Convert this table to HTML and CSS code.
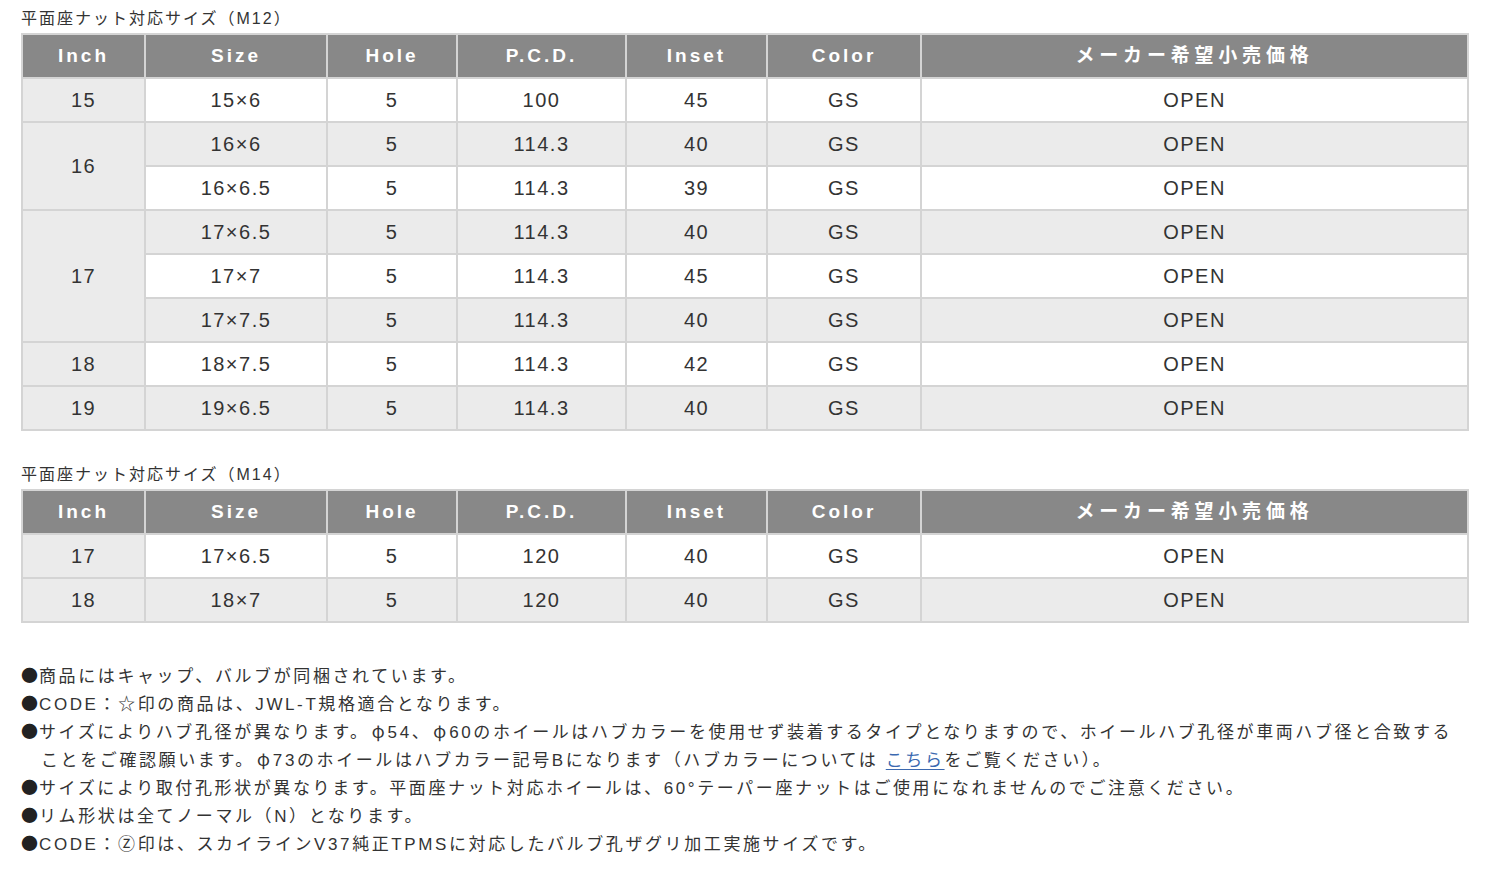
FILE: index.html
```html
<!DOCTYPE html>
<html lang="ja">
<head>
<meta charset="utf-8">
<title>サイズ表</title>
<link rel="stylesheet" href="styles.css">
</head>
<body>
<div class="page">
  <h2 class="caption">平面座ナット対応サイズ（M12）</h2>
  <table class="spec">
    <colgroup>
      <col class="c-inch"><col class="c-size"><col class="c-hole"><col class="c-pcd"><col class="c-inset"><col class="c-color"><col class="c-price">
    </colgroup>
    <thead>
      <tr><th>Inch</th><th>Size</th><th>Hole</th><th>P.C.D.</th><th>Inset</th><th>Color</th><th class="jp">メーカー希望小売価格</th></tr>
    </thead>
    <tbody>
      <tr><td class="inch">15</td><td>15×6</td><td>5</td><td>100</td><td>45</td><td>GS</td><td>OPEN</td></tr>
      <tr class="alt"><td class="inch" rowspan="2">16</td><td>16×6</td><td>5</td><td>114.3</td><td>40</td><td>GS</td><td>OPEN</td></tr>
      <tr><td>16×6.5</td><td>5</td><td>114.3</td><td>39</td><td>GS</td><td>OPEN</td></tr>
      <tr class="alt"><td class="inch" rowspan="3">17</td><td>17×6.5</td><td>5</td><td>114.3</td><td>40</td><td>GS</td><td>OPEN</td></tr>
      <tr><td>17×7</td><td>5</td><td>114.3</td><td>45</td><td>GS</td><td>OPEN</td></tr>
      <tr class="alt"><td>17×7.5</td><td>5</td><td>114.3</td><td>40</td><td>GS</td><td>OPEN</td></tr>
      <tr><td class="inch">18</td><td>18×7.5</td><td>5</td><td>114.3</td><td>42</td><td>GS</td><td>OPEN</td></tr>
      <tr class="alt"><td class="inch">19</td><td>19×6.5</td><td>5</td><td>114.3</td><td>40</td><td>GS</td><td>OPEN</td></tr>
    </tbody>
  </table>

  <h2 class="caption">平面座ナット対応サイズ（M14）</h2>
  <table class="spec">
    <colgroup>
      <col class="c-inch"><col class="c-size"><col class="c-hole"><col class="c-pcd"><col class="c-inset"><col class="c-color"><col class="c-price">
    </colgroup>
    <thead>
      <tr><th>Inch</th><th>Size</th><th>Hole</th><th>P.C.D.</th><th>Inset</th><th>Color</th><th class="jp">メーカー希望小売価格</th></tr>
    </thead>
    <tbody>
      <tr><td class="inch">17</td><td>17×6.5</td><td>5</td><td>120</td><td>40</td><td>GS</td><td>OPEN</td></tr>
      <tr class="alt"><td class="inch">18</td><td>18×7</td><td>5</td><td>120</td><td>40</td><td>GS</td><td>OPEN</td></tr>
    </tbody>
  </table>

  <div class="notes">
    <p><span class="dot">●</span>商品にはキャップ、バルブが同梱されています。</p>
    <p><span class="dot">●</span>CODE：☆印の商品は、JWL-T規格適合となります。</p>
    <p><span class="dot">●</span>サイズによりハブ孔径が異なります。<span class="phi">φ</span>54、<span class="phi">φ</span>60のホイールはハブカラーを使用せず装着するタイプとなりますので、ホイールハブ孔径が車両ハブ径と合致することをご確認願います。<span class="phi">φ</span>73のホイールはハブカラー記号Bになります（ハブカラーについては <a href="#">こちら</a>をご覧ください）。</p>
    <p><span class="dot">●</span>サイズにより取付孔形状が異なります。平面座ナット対応ホイールは、60°テーパー座ナットはご使用になれませんのでご注意ください。</p>
    <p><span class="dot">●</span>リム形状は全てノーマル（N）となります。</p>
    <p><span class="dot">●</span>CODE：Ⓩ印は、スカイラインV37純正TPMSに対応したバルブ孔ザグリ加工実施サイズです。</p>
  </div>
</div>
</body>
</html>
```

FILE: styles.css
```css
html, body {
  margin: 0;
  padding: 0;
  background: #ffffff;
}

body {
  font-family: "Liberation Sans", "Noto Sans CJK JP", sans-serif;
  color: #333333;
}

.page {
  padding: 5px 20px 20px 21px;
}

.caption {
  margin: 0 0 2px 0;
  padding-top: 2px;
  font-size: 16px;
  font-weight: normal;
  line-height: 24px;
  letter-spacing: 2px;
  color: #333333;
}

.spec {
  width: 1446px;
  border-collapse: collapse;
  table-layout: fixed;
  margin-bottom: 30px;
}

.c-inch { width: 123px; }
.c-size { width: 182px; }
.c-hole { width: 130px; }
.c-pcd { width: 169px; }
.c-inset { width: 141px; }
.c-color { width: 154px; }
.c-price { width: 547px; }

.spec th,
.spec td {
  border: 2px solid #d4d4d4;
  height: 42px;
  padding: 0;
  text-align: center;
  vertical-align: middle;
  font-size: 20px;
  letter-spacing: 1.5px;
  line-height: 22px;
}

.spec th {
  background: #888888;
  color: #ffffff;
  font-weight: bold;
  font-size: 19px;
  letter-spacing: 3px;
}

.spec th.jp {
  letter-spacing: 4.8px;
}

.spec td {
  background: #ffffff;
  color: #333333;
}

.spec tr.alt td {
  background: #ebebeb;
}

.spec td.inch {
  background: #ebebeb;
}

.notes {
  margin-top: 40px;
  padding-right: 12px;
}

.notes p {
  margin: 0;
  padding-left: 20px;
  text-indent: -20px;
  font-size: 17px;
  line-height: 28px;
  letter-spacing: 2.6px;
  color: #333333;
}

.notes .dot {
  font-family: "Noto Sans CJK JP", sans-serif;
  line-height: 1;
  letter-spacing: 1px;
  color: #222222;
}

.notes .phi {
  font-family: "Noto Sans CJK JP", sans-serif;
  line-height: 1;
  letter-spacing: 0;
  margin: 0 3px 0 2px;
}

.notes a {
  color: #3b69b0;
  text-decoration: underline;
  text-underline-offset: 3px;
}
```
